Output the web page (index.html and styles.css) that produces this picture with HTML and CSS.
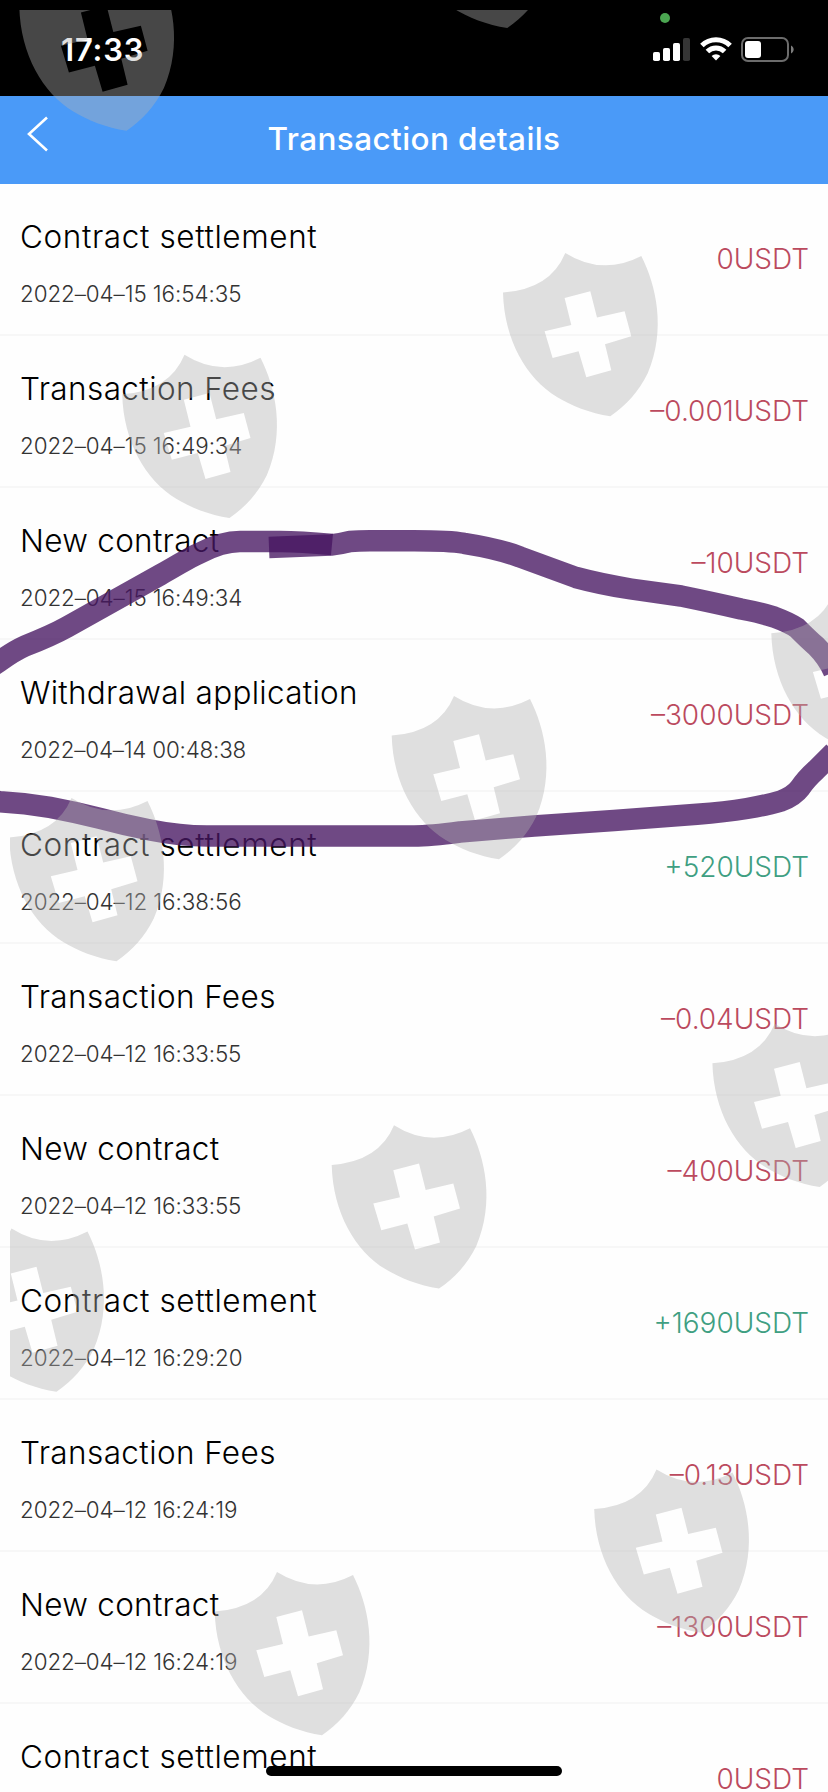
FILE: index.html
```
<!DOCTYPE html>
<html lang="en">
<head>
<meta charset="utf-8">
<title>Transaction details</title>
<link rel="stylesheet" href="styles.css">
</head>
<body>
<div class="screen">
  <header class="status">
    <span class="time">17:33</span>
    <div class="status-icons">
      <svg class="signal" width="37" height="23" viewBox="0 0 37 23"><g fill="#fff"><rect x="0" y="14" width="7" height="9" rx="1.8"/><rect x="10" y="10" width="7" height="13" rx="1.8"/><rect x="20" y="5" width="7" height="18" rx="1.8"/></g><rect x="30" y="0" width="7" height="23" rx="1.8" fill="#353535"/></svg>
      <svg class="wifi" width="32" height="24" viewBox="0 0 32 24"><g fill="none" stroke="#fff" stroke-width="5"><path d="M1.9 8.6a20 20 0 0 1 28.200 0"/><path d="M7.400 14.500a12.200 12.200 0 0 1 17.200 0"/></g><path d="M11.600 19a6.200 6.200 0 0 1 8.800 0L16 23.500z" fill="#fff"/></svg>
      <svg class="battery" width="53" height="25" viewBox="0 0 53 25"><rect x="1" y="1" width="46" height="23" rx="6" fill="none" stroke="#6c6c6c" stroke-width="2"/><rect x="4" y="4" width="16" height="17" rx="3" fill="#fff"/><path d="M50 8.500c3.500 1.500 3.500 6.500 0 8z" fill="#7c7c7c"/></svg>
    </div>
    <i class="camera-dot"></i>
  </header>
  <nav class="nav">
    <svg class="back" width="22" height="38" viewBox="0 0 22 38"><path d="M20 2.500 2 19l18 16.500" fill="none" stroke="#fff" stroke-width="2.600"/></svg>
    <h1 class="nav-title">Transaction details</h1>
  </nav>
  <main class="list">
    <article class="row"><div><h2 class="name settle">Contract settlement</h2><p class="date">2022–04–15 16:54:35</p></div><strong class="amount">0USDT</strong></article>
    <article class="row"><div><h2 class="name fees">Transaction Fees</h2><p class="date">2022–04–15 16:49:34</p></div><strong class="amount">–0.001USDT</strong></article>
    <article class="row"><div><h2 class="name">New contract</h2><p class="date">2022–04–15 16:49:34</p></div><strong class="amount">–10USDT</strong></article>
    <article class="row"><div><h2 class="name">Withdrawal application</h2><p class="date withdrawn">2022–04–14 00:48:38</p></div><strong class="amount">–3000USDT</strong></article>
    <article class="row"><div><h2 class="name settle">Contract settlement</h2><p class="date">2022–04–12 16:38:56</p></div><strong class="amount gain">+520USDT</strong></article>
    <article class="row"><div><h2 class="name fees">Transaction Fees</h2><p class="date">2022–04–12 16:33:55</p></div><strong class="amount">–0.04USDT</strong></article>
    <article class="row"><div><h2 class="name">New contract</h2><p class="date">2022–04–12 16:33:55</p></div><strong class="amount">–400USDT</strong></article>
    <article class="row"><div><h2 class="name settle">Contract settlement</h2><p class="date">2022–04–12 16:29:20</p></div><strong class="amount gain">+1690USDT</strong></article>
    <article class="row"><div><h2 class="name fees">Transaction Fees</h2><p class="date">2022–04–12 16:24:19</p></div><strong class="amount">–0.13USDT</strong></article>
    <article class="row"><div><h2 class="name">New contract</h2><p class="date">2022–04–12 16:24:19</p></div><strong class="amount">–1300USDT</strong></article>
    <article class="row last"><div><h2 class="name settle">Contract settlement</h2></div><strong class="amount">0USDT</strong></article>
  </main>
  <div class="home-bar"></div>
  <svg class="overlay" width="828" height="1792" viewBox="0 0 828 1792">
    <defs>
      <path id="shield" fill-rule="evenodd" d="M12.700 52.300Q60 49 75 12.700Q112 36 151 15.700C166 45 176 90 157.300 133.300C148 152 136 165 120 176C100 173 80 165 66.700 156.700C36 138 14 100 12.700 52.300ZM74.300 57.700 100 51l6.700 26.300 27.600-6.300 6.700 25-26.300 8 6.300 26-25 7-7.700-26-26 6.700-8-26.700 26.700-6.300Z"/>
      <clipPath id="area"><rect x="10" y="10" width="818" height="1782"/></clipPath>
    </defs>
    <!-- Marker strokes around the withdrawal row -->
    <g class="marker">
      <path d="M-6 665L0 661Q14 651 25 646C48 637 58 632 67 627L160 575C180 564 190 557 200 553Q222 541.500 240 541.500L280 541.500Q300 541.500 332 544.500"/>
      <path d="M269 547.500L331 545Q340 544 350 541.500Q358 540.700 370 540.700H414Q450 540.700 464 543.300Q500 549 520 557L576 577.500Q600 584 631 589Q660 593 681 596Q715 603 741 609Q762 613 774 617Q790 623 797 628Q810 641 816 646Q828 658 834 672"/>
      <path d="M-6 801L0 801.700Q25 803 50 807.300Q75 812 100 818.300Q125 825 150 830Q180 836 207 836H414Q430 836 460 832L534 826L614 820.500L697 814.300Q725 812 747 808.500Q768 805 781 801Q794 796 800 788Q806 779 816 770L834 752"/>
    </g>
    <!-- Shield watermarks -->
    <g class="shields" clip-path="url(#area)">
      <use href="#shield" x="6.600" y="-45.300"/><use href="#shield" x="387.300" y="-148"/>
      <use href="#shield" x="490.300" y="240.200"/><use href="#shield" x="109.500" y="342"/>
      <use href="#shield" x="758.600" y="581"/><use href="#shield" x="379" y="683.300"/>
      <use href="#shield" x="-3.500" y="785.200"/><use href="#shield" x="699.700" y="1011"/>
      <use href="#shield" x="319" y="1112.600"/><use href="#shield" x="-63.500" y="1215.800"/>
      <use href="#shield" x="581.500" y="1456.800"/><use href="#shield" x="202" y="1559.300"/>
    </g>
  </svg>
</div>
</body>
</html>
```
FILE: styles.css
```
* { box-sizing: border-box; }
body { margin: 0; background: #fefefe; font-family: Inter, "Noto Sans", sans-serif; }
h1, h2, p { margin: 0; }
.screen { position: relative; width: 828px; height: 1792px; overflow: hidden; }
.status { position: relative; height: 96px; background: #000; display: flex; justify-content: space-between; align-items: flex-start; padding: 30px 34px 0 61px; }
.time { color: #fff; font-size: 31px; line-height: 40px; font-weight: 600; letter-spacing: .8px; }
.status-icons { display: flex; padding-top: 7px; }
.signal { margin: 1px 10px 0 0; }
.wifi { margin-right: 9px; }
.camera-dot { position: absolute; left: 660px; top: 13px; width: 10px; height: 10px; border-radius: 50%; background: #4ba651; }
.nav { height: 88px; background: #4a9af8; display: grid; grid-template-columns: 60px 1fr 60px; padding-top: 18px; }
.back { margin: 1px 0 0 27px; }
.nav-title { color: #fff; font-size: 31.500px; line-height: 40px; font-weight: 500; letter-spacing: .4px; text-align: center; padding-top: 5px; white-space: nowrap; }
.row { height: 152px; display: flex; justify-content: space-between; padding: 33px 20px 0; border-bottom: 2px solid #f7f7f7; }
.last { height: 88px; border-bottom: 0; }
.name { color: #000; font-size: 31.500px; line-height: 40px; font-weight: 350; letter-spacing: .28px; white-space: nowrap; }
.settle { letter-spacing: .6px; }
.fees { letter-spacing: .4px; }
.date { color: #333; font-size: 22.400px; line-height: 30px; font-weight: 300; letter-spacing: -.08px; margin-top: 22px; white-space: nowrap; }
.withdrawn { letter-spacing: -.2px; }
.amount { color: #bb4a5e; font-size: 28px; line-height: 40px; font-weight: 300; padding-top: 22px; margin-right: -1px; white-space: nowrap; }
.last .amount { line-height: 26px; padding-top: 29px; }
.gain { color: #3f9f82; }
.home-bar { position: absolute; left: 266px; top: 1766px; width: 296px; height: 10px; border-radius: 5px; background: #000; }
.overlay { position: absolute; left: 0; top: 0; }
.marker { filter: blur(.6px); }
.marker path { fill: none; stroke: rgb(70, 22, 98); stroke-opacity: .78; stroke-width: 21.500px; stroke-linejoin: round; }
.shields { fill: #b2b2b2; opacity: .4; }
```
